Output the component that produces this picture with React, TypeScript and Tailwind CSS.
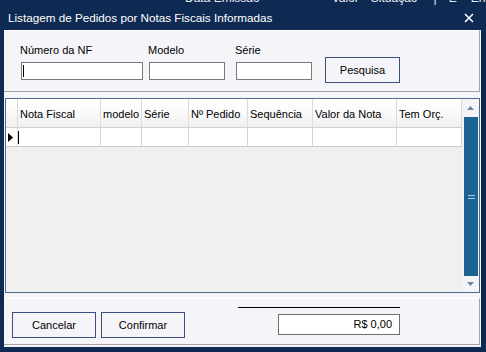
const cols = [
  { w: "w-[12px]", label: "" },
  { w: "w-[83px]", label: "Nota Fiscal" },
  { w: "w-[41px]", label: "modelo" },
  { w: "w-[47px]", label: "Série" },
  { w: "w-[59px]", label: "Nº Pedido" },
  { w: "w-[65px]", label: "Sequência" },
  { w: "w-[84px]", label: "Valor da Nota" },
  { w: "w-[65px]", label: "Tem Orç." },
];

function Field({ label, width, cursor }: { label: string; width: string; cursor?: boolean }) {
  return (
    <div className="flex flex-col">
      <span className="leading-[13px] mb-[5px] -ml-[1px]">{label}</span>
      <div className={`${width} h-[18px] border border-[#7a7a7a] bg-white flex items-center pl-[1px]`}>
        {cursor && <span className="w-[1px] h-[12px] bg-black" />}
      </div>
    </div>
  );
}

export default function App() {
  return (
    <div className="w-[486px] h-[352px] bg-[#0f2a52] flex flex-col overflow-hidden font-['Liberation_Sans',Arial,sans-serif] text-[11px] text-black">
      {/* window behind, only the bottom of its last text line peeks out */}
      <div className="h-[5px] overflow-hidden flex items-start whitespace-nowrap text-[12px] text-[#e8ecf2] leading-[14px]">
        <span className="ml-[185px] -mt-[9px]">Data Emissão</span>
        <span className="ml-[72px] -mt-[9px]">Valor</span>
        <span className="ml-[12px] -mt-[9px]">Situação</span>
        <span className="ml-[16px] -mt-[9px]">|</span>
        <span className="ml-[12px] -mt-[9px]">E</span>
        <span className="ml-[14px] -mt-[9px]">Ent</span>
      </div>

      {/* title bar */}
      <div className="h-[25px] flex items-center justify-between pl-[8px] pr-[12px] text-white">
        <span className="text-[11.7px] leading-[14px]">Listagem de Pedidos por Notas Fiscais Informadas</span>
        <svg width="10" height="10" viewBox="0 0 10 10" className="mt-[1px]">
          <path d="M1 1 L9 9 M9 1 L1 9" stroke="white" strokeWidth="1.6" />
        </svg>
      </div>

      {/* client area */}
      <div className="ml-[4px] w-[477px] h-[317px] bg-[#f4f4f9] flex flex-col">
        {/* filter panel */}
        <div className="w-[476px] h-[62px] border-t border-t-white border-r border-b border-r-[#a3a3a8] border-b-[#a3a3a8] flex items-start pl-[17px] pt-[13px]">
          <Field label="Número da NF" width="w-[122px]" cursor />
          <div className="ml-[6px]">
            <Field label="Modelo" width="w-[76px]" />
          </div>
          <div className="ml-[11px]">
            <Field label="Série" width="w-[76px]" />
          </div>
          <button className="ml-[13px] mt-[13px] w-[75px] h-[26px] border border-[#3c4d7e] bg-[#f4f4f9] flex items-center justify-center">
            Pesquisa
          </button>
        </div>

        {/* grid */}
        <div className="mt-[6px] ml-[1px] w-[475px] h-[195px] border border-[#4f6e8f] flex">
          <div className="w-[456px] flex flex-col">
            <div className="h-[29px] flex border-b border-[#cfcfcf] bg-gradient-to-b from-white via-[#fafafa] to-[#efefef]">
              {cols.map((c, i) => (
                <div key={i} className={`${c.w} border-r border-[#dadada] pl-[2px] pt-[3px] flex items-center`}>
                  {c.label}
                </div>
              ))}
            </div>
            <div className="h-[19px] flex border-b border-[#cbcbcb] bg-white">
              {cols.map((c, i) => (
                <div key={i} className={`${c.w} border-r border-[#d6d6d6] flex items-center`}>
                  {i === 0 && (
                    <svg width="5" height="9" viewBox="0 0 5 9" className="ml-[2px]">
                      <polygon points="0,0 5,4.5 0,9" fill="black" />
                    </svg>
                  )}
                  {i === 1 && <span className="w-[1px] h-[13px] bg-black" />}
                </div>
              ))}
            </div>
            <div className="flex-1 bg-[#f0f0f0]" />
          </div>

          {/* scrollbar */}
          <div className="w-[17px] flex flex-col bg-[#f4f4f8]">
            <div className="h-[18px] flex items-center justify-center">
              <svg width="7" height="4" viewBox="0 0 7 4">
                <polygon points="3.5,0 7,4 0,4" fill="#6a86aa" />
              </svg>
            </div>
            <div className="flex-1 ml-[2px] mr-[1px] bg-[#1b6391] flex flex-col items-center justify-center gap-[2px]">
              <span className="w-[7px] h-[1px] bg-[#a9cbe3]" />
              <span className="w-[7px] h-[1px] bg-[#a9cbe3]" />
            </div>
            <div className="h-[16px] flex items-center justify-center">
              <svg width="7" height="4" viewBox="0 0 7 4">
                <polygon points="0,0 7,0 3.5,4" fill="#6a86aa" />
              </svg>
            </div>
          </div>
        </div>

        {/* footer panel */}
        <div className="mt-[5px] w-[476px] h-[47px] border-t border-t-white border-r border-b border-r-[#a3a3a8] border-b-[#a3a3a8] flex items-start pl-[8px]">
          <button className="mt-[13px] w-[84px] h-[26px] border border-[#3c4d7e] bg-[#f4f4f9] flex items-center justify-center">
            Cancelar
          </button>
          <button className="ml-[5px] mt-[13px] w-[84px] h-[26px] border border-[#3c4d7e] bg-[#f4f4f9] flex items-center justify-center">
            Confirmar
          </button>
          <div className="ml-auto mr-[79px] w-[162px] flex flex-col items-end">
            <div className="mt-[8px] w-full h-[1px] bg-black" />
            <div className="mt-[6px] w-[122px] h-[21px] border border-[#6e6e6e] bg-white flex items-center justify-end pr-[7px]">
              R$ 0,00
            </div>
          </div>
        </div>
      </div>
    </div>
  );
}
